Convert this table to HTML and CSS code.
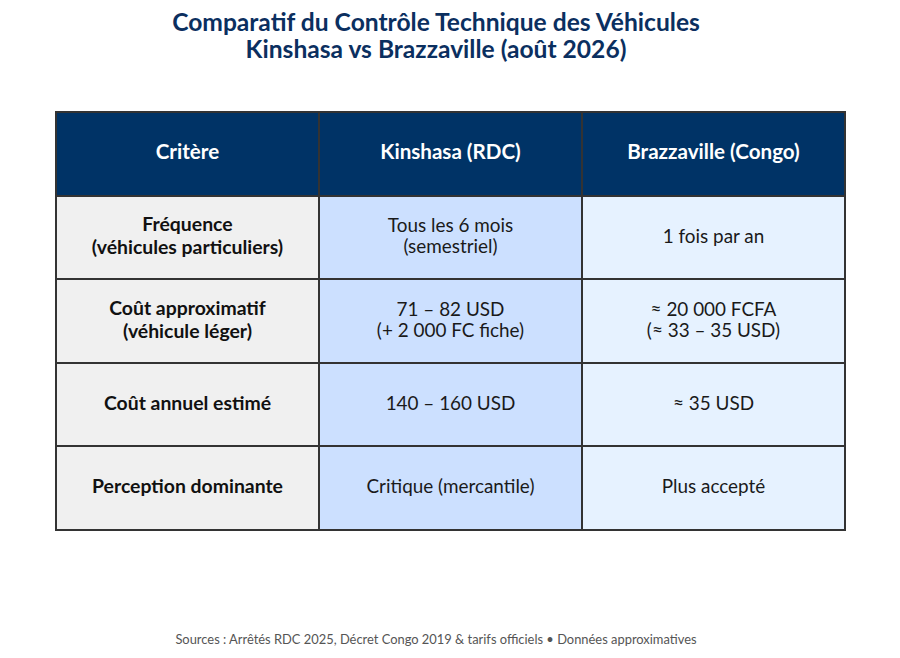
FILE: index.html
```html
<!DOCTYPE html>
<html lang="fr">
<head>
<meta charset="utf-8">
<title>Comparatif du Contrôle Technique</title>
<link rel="stylesheet" href="styles.css">
</head>
<body>
<div class="page">
  <h1 class="title">Comparatif du Contrôle Technique des Véhicules<br>Kinshasa vs Brazzaville (août 2026)</h1>
  <table class="cmp">
    <thead>
      <tr>
        <th>Critère</th>
        <th>Kinshasa (RDC)</th>
        <th>Brazzaville (Congo)</th>
      </tr>
    </thead>
    <tbody>
      <tr>
        <td class="crit">Fréquence<br>(véhicules particuliers)</td>
        <td class="kin">Tous les 6 mois<br>(semestriel)</td>
        <td class="bzv">1 fois par an</td>
      </tr>
      <tr>
        <td class="crit">Coût approximatif<br>(véhicule léger)</td>
        <td class="kin">71 – 82 USD<br>(+ 2 000 FC fiche)</td>
        <td class="bzv">≈ 20 000 FCFA<br>(≈ 33 – 35 USD)</td>
      </tr>
      <tr>
        <td class="crit">Coût annuel estimé</td>
        <td class="kin">140 – 160 USD</td>
        <td class="bzv">≈ 35 USD</td>
      </tr>
      <tr>
        <td class="crit">Perception dominante</td>
        <td class="kin">Critique (mercantile)</td>
        <td class="bzv">Plus accepté</td>
      </tr>
    </tbody>
  </table>
  <p class="footer">Sources : Arrêtés RDC 2025, Décret Congo 2019 &amp; tarifs officiels • Données approximatives</p>
</div>
</body>
</html>
```
FILE: styles.css
```css
html, body {
  margin: 0;
  padding: 0;
  background: #ffffff;
}
body {
  font-family: Lato, "Noto Sans", sans-serif;
  color: #111;
  width: 900px;
  height: 658px;
}
.page {
  display: flex;
  flex-direction: column;
  align-items: center;
  height: 658px;
}
.title {
  margin: 8px 28px 0 0;
  font-size: 24.6px;
  line-height: 27px;
  font-weight: 700;
  color: #0b2f5f;
  text-align: center;
}
.cmp {
  margin-top: 49px;
  margin-left: 1px;
  width: 791px;
  border-collapse: collapse;
  table-layout: fixed;
  border: 2px solid #333;
}
.cmp th, .cmp td {
  border: 2px solid #333;
  text-align: center;
  vertical-align: middle;
  height: 77.5px;
  padding: 0 6px 4px;
  font-size: 18.9px;
  line-height: 21px;
}
.cmp th {
  background: #003366;
  color: #fff;
  font-weight: 700;
  font-size: 20.6px;
}
.crit {
  background: #f0f0f0;
  font-weight: 700;
  color: #111;
}
.cmp td.crit {
  font-size: 19.4px;
  line-height: 23px;
}
.kin {
  background: #cce0ff;
  color: #1a1a1a;
}
.bzv {
  background: #e6f2ff;
  color: #1a1a1a;
}
.footer {
  margin: auto 28px 11px 0;
  font-size: 12.9px;
  color: #555;
}
```
